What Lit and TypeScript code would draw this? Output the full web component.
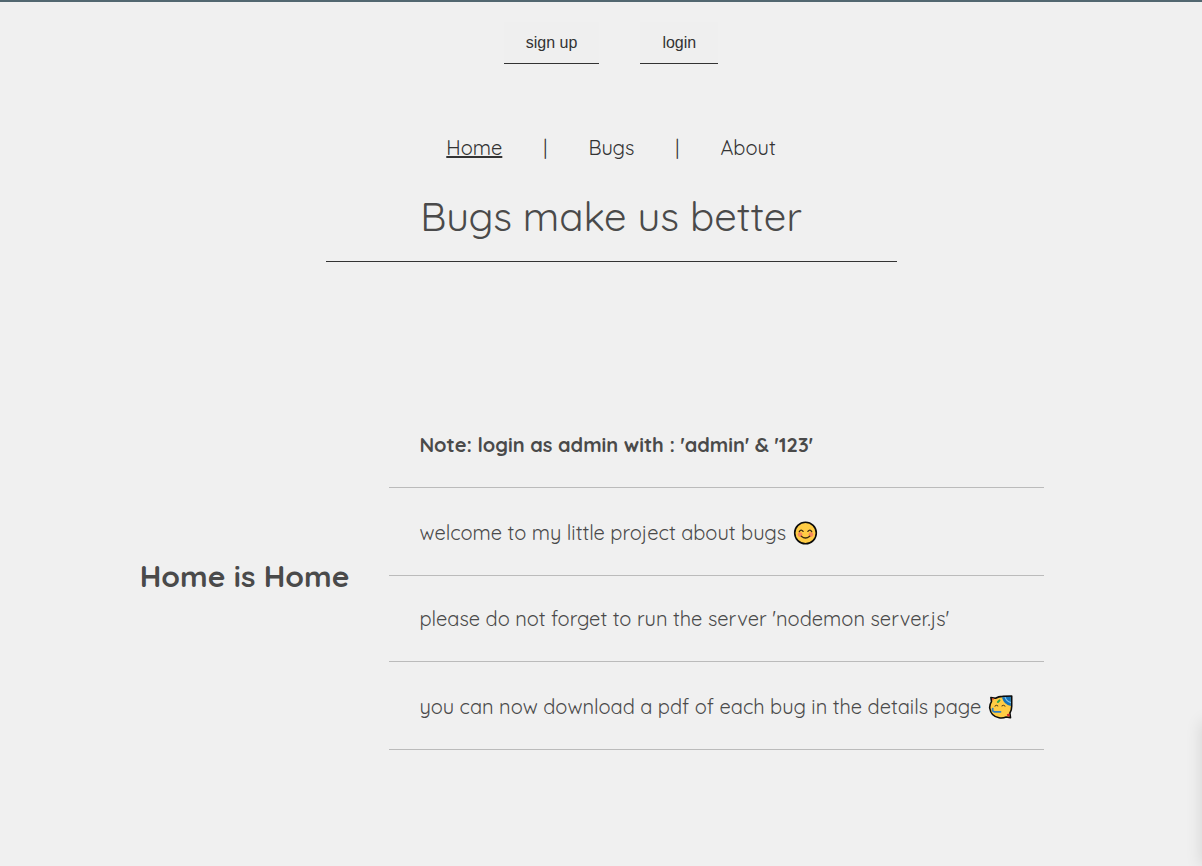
import { LitElement, html, css, svg } from "lit";
import { customElement } from "lit/decorators.js";
import { classMap } from "lit/directives/class-map.js";

const smile = svg`
  <circle cx="12" cy="12" r="10.8" fill="#fc4" stroke="#0b0b0b" stroke-width="1.6"/>
  <circle cx="6.6" cy="13.6" r="2.4" fill="#f98a5c"/>
  <circle cx="17.4" cy="13.6" r="2.4" fill="#f98a5c"/>
  <path d="M5.8 10.6Q7.6 7.6 9.6 10.4M14.4 10.4Q16.4 7.6 18.2 10.6M7.8 15.2Q12 18.8 16.2 15.2"
    fill="none" stroke="#3b2a12" stroke-width="1.3" stroke-linecap="round"/>`;

const party = svg`
  <path d="M2.4 2.6L7 3.2Q10 1.4 14 1.4L23.2 1V10.4Q23.4 14.6 21.4 18L22 22.6L17.6 22Q14.4 23.4 10.6 22.8Q2.4 21.4 1.2 13Q1 9.4 3 6.6Z"
    fill="#fc4" stroke="#0b0b0b" stroke-width="1.6" stroke-linejoin="round"/>
  <path d="M13.4 2.2L22.4 1.8V11Q15.4 9.6 13.4 2.2Z" fill="#1673b8"/>
  <path d="M16.6 2.2Q17.8 6.6 22.4 7.6" fill="none" stroke="#7cc4f2" stroke-width="1.2"/>
  <path d="M3.2 3.2L5.8 3.6L4.2 6Z" fill="#e5532d"/>
  <path d="M18.4 19.2L20.8 18.6L21.2 21.6L18.8 21Z" fill="#d6262c"/>
  <path d="M9.4 7L11 5.4" stroke="#2fa84f" stroke-width="2" stroke-linecap="round"/>
  <path d="M6.4 11Q7.8 9.4 9.4 10.8M13.4 10.8Q15 9.4 16.6 11" fill="none" stroke="#4b3512" stroke-width="1" stroke-linecap="round"/>
  <path d="M4.2 13.6Q3.4 17 6.4 16.8H12" fill="none" stroke="#2f7fc6" stroke-width="1.8" stroke-linecap="round"/>`;

const notes = [
  { text: "Note: login as admin with : 'admin' & '123'", strong: true },
  { text: "welcome to my little project about bugs", icon: smile, label: "smiling face" },
  { text: "please do not forget to run the server 'nodemon server.js'" },
  { text: "you can now download a pdf of each bug in the details page", icon: party, label: "partying face" },
];

@customElement("app-root")
export class AppRoot extends LitElement {
  static styles = css`
    :host {
      display: block;
      position: relative;
      overflow: hidden;
      box-sizing: border-box;
      min-height: 100vh;
      padding: 0 20px 40px 40px;
      border-top: 2px solid #526770;
      background: #f0f0f0;
      color: #4a4a4a;
      font-family: Quicksand, Inter, sans-serif;
      font-size: 20px;
      line-height: 25px;
    }
    .account {
      display: flex;
      justify-content: center;
      gap: 41px;
      padding-top: 20px;
    }
    .account button {
      height: 42px;
      padding: 0 22px;
      border: 0;
      border-bottom: 1px solid #333;
      background: #efefef;
      color: #333;
      font: 16px "Liberation Sans", Arial, sans-serif;
      cursor: pointer;
    }
    .menu {
      display: flex;
      justify-content: center;
      gap: 41px;
      margin-top: 71px;
      color: #333;
    }
    .menu a {
      color: inherit;
      text-decoration: none;
    }
    .menu .current {
      text-decoration: underline;
    }
    .title {
      width: 50%;
      margin: 31px auto 0;
      padding-bottom: 20px;
      border-bottom: 1px solid #333;
      font-size: 40px;
      font-weight: 400;
      line-height: 50px;
      text-align: center;
    }
    .home {
      display: flex;
      align-items: center;
      justify-content: center;
      gap: 40px;
      margin-top: 140px;
      padding-right: 38px;
    }
    .home h2 {
      margin: 0;
      font-size: 30px;
      font-weight: 700;
      line-height: 38px;
    }
    .notes {
      margin: 0;
      padding: 0;
      list-style: none;
    }
    .notes li {
      display: flex;
      align-items: flex-end;
      gap: 6px;
      padding: 30px;
      border-bottom: 1px solid #bbb;
    }
    .notes .strong {
      font-weight: 700;
    }
    .emoji {
      flex: none;
      width: 27px;
      height: 24px;
      padding-top: 3px;
    }
    .drawer {
      position: absolute;
      top: 720px;
      bottom: 0;
      left: 100%;
      width: 200px;
      box-shadow: 0 0 16px rgba(0, 0, 0, 0.12);
    }
  `;

  render() {
    return html`
      <header>
        <div class="account">
          <button type="button">sign up</button>
          <button type="button">login</button>
        </div>
        <nav class="menu">
          <a class="current" href="#/" aria-current="page">Home</a>
          <span>|</span>
          <a href="#/bug">Bugs</a>
          <span>|</span>
          <a href="#/about">About</a>
        </nav>
        <h1 class="title">Bugs make us better</h1>
      </header>
      <main class="home">
        <h2>Home is Home</h2>
        <ul class="notes">
          ${notes.map(
            (n) => html`<li class=${classMap({ strong: !!n.strong })}>
              <span>${n.text}</span>
              ${n.icon
                ? html`<svg class="emoji" viewBox="0 0 24 24" role="img" aria-label=${n.label}>${n.icon}</svg>`
                : ""}
            </li>`
          )}
        </ul>
      </main>
      <div class="drawer"></div>
    `;
  }
}
